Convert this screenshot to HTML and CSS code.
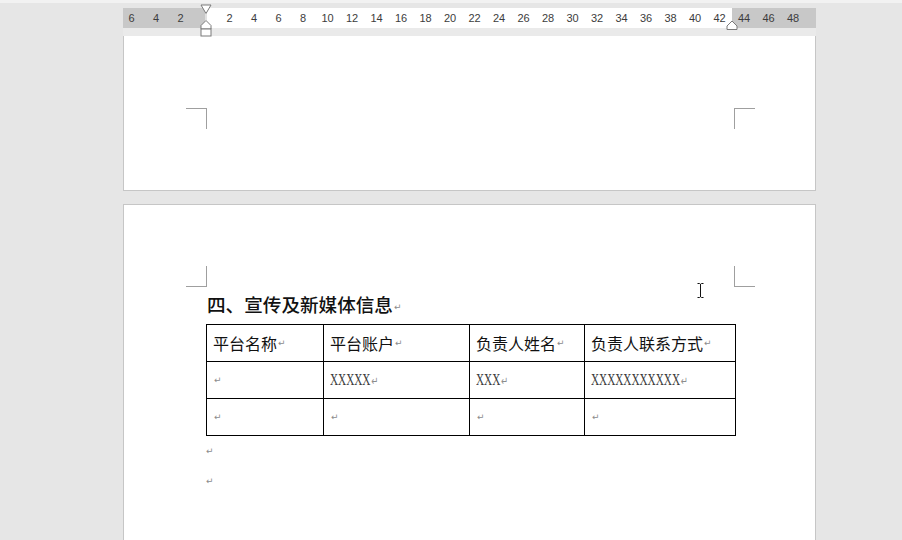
FILE: index.html
```html
<!DOCTYPE html>
<html lang="zh">
<head>
<meta charset="utf-8">
<title>Document</title>
<link rel="stylesheet" href="styles.css">
</head>
<body>
<div class="top-strip"></div>
<div class="ruler">
  <div class="ticks">
    <span>6</span><span>4</span><span>2</span><span></span><span>2</span><span>4</span><span>6</span><span>8</span><span>10</span><span>12</span><span>14</span><span>16</span><span>18</span><span>20</span><span>22</span><span>24</span><span>26</span><span>28</span><span>30</span><span>32</span><span>34</span><span>36</span><span>38</span><span>40</span><span>42</span><span>44</span><span>46</span><span>48</span>
  </div>
  <svg class="indent-left" width="12" height="33" viewBox="0 0 12 33">
    <polygon points="1,1 11,1 6,9.5" fill="#fff" stroke="#7a7a7a" stroke-width="1"/>
    <polygon points="6,16.5 11,21.5 11,25 1,25 1,21.5" fill="#fff" stroke="#7a7a7a" stroke-width="1"/>
    <rect x="1" y="25" width="10" height="7" fill="#fff" stroke="#7a7a7a" stroke-width="1"/>
    <line x1="6" y1="9.5" x2="6" y2="16.5" stroke="#9a9a9a" stroke-width="0.6"/>
  </svg>
  <svg class="indent-right" width="12" height="11" viewBox="0 0 12 11">
    <polygon points="6,1 11,6 11,9.5 1,9.5 1,6" fill="#fff" stroke="#7a7a7a" stroke-width="1"/>
  </svg>
</div>
<div class="ruler-gap"></div>
<div class="page page-one">
  <div class="corners corners-bottom">
    <div class="corner corner-bl"></div>
    <div class="corner corner-br"></div>
  </div>
</div>
<div class="page page-two">
  <div class="corners corners-top">
    <div class="corner corner-tl"></div>
    <div class="corner corner-tr"></div>
  </div>
  <div class="body-text">
    <h2 class="heading">四、宣传及新媒体信息<span class="pm">↵</span></h2>
    <div class="grid-table">
      <div class="cell head">平台名称<span class="pm">↵</span></div>
      <div class="cell head">平台账户<span class="pm">↵</span></div>
      <div class="cell head">负责人姓名<span class="pm">↵</span></div>
      <div class="cell head">负责人联系方式<span class="pm">↵</span></div>
      <div class="cell"><span class="pm">↵</span></div>
      <div class="cell"><span class="latin">XXXXX<span class="pm">↵</span></span></div>
      <div class="cell"><span class="latin">XXX<span class="pm">↵</span></span></div>
      <div class="cell"><span class="latin">XXXXXXXXXXX<span class="pm">↵</span></span></div>
      <div class="cell"><span class="pm">↵</span></div>
      <div class="cell"><span class="pm">↵</span></div>
      <div class="cell"><span class="pm">↵</span></div>
      <div class="cell"><span class="pm">↵</span></div>
    </div>
    <p class="empty-para"><span class="pm">↵</span></p>
    <p class="empty-para"><span class="pm">↵</span></p>
  </div>
  <svg class="ibeam" width="9" height="17" viewBox="0 0 9 17">
    <path d="M1.5 1.5 H3.5 M5.5 1.5 H7.5 M4.5 2 V15 M1.5 15.5 H3.5 M5.5 15.5 H7.5 M3.5 1.5 L4.5 2.3 L5.5 1.5 M3.5 15.5 L4.5 14.7 L5.5 15.5" stroke="#111" stroke-width="1" fill="none"/>
  </svg>
</div>
</body>
</html>
```

FILE: styles.css
```css
html, body {
  margin: 0;
  padding: 0;
}
body {
  width: 902px;
  height: 540px;
  overflow: hidden;
  background: #e6e6e6;
  font-family: "Noto Sans CJK SC", "Liberation Sans", sans-serif;
  display: flex;
  flex-direction: column;
}
.top-strip {
  height: 3px;
  background: #f2f2f2;
  flex: none;
}
.ruler {
  position: relative;
  flex: none;
  margin-top: 5px;
  margin-left: 123px;
  width: 693px;
  height: 20px;
  background: linear-gradient(to right, #c8c8c8 0 82px, #ffffff 82px 609px, #c8c8c8 609px 693px);
  z-index: 2;
}
.ticks {
  display: flex;
  margin-left: -3.75px;
  height: 20px;
  align-items: center;
}
.ticks span {
  flex: none;
  width: 24.5px;
  text-align: center;
  font-family: "Liberation Sans", Arial, sans-serif;
  font-size: 11px;
  color: #3c3c3c;
  line-height: 20px;
}
.indent-left {
  position: absolute;
  left: 77px;
  top: -4px;
}
.indent-right {
  position: absolute;
  left: 603px;
  top: 12px;
}
.ruler-gap {
  flex: none;
  height: 8px;
  margin-left: 123px;
  width: 693px;
  background: #eaeaea;
}
.page {
  flex: none;
  margin-left: 123px;
  width: 691px;
  background: #ffffff;
  border: 1px solid #c6c6c6;
}
.page-one {
  border-top: none;
  height: 154px;
}
.page-two {
  position: relative;
  margin-top: 13px;
  height: 400px;
}
.corners {
  display: flex;
  justify-content: space-between;
  margin-left: 62px;
  width: 569px;
}
.corners-bottom {
  margin-top: 72px;
}
.corners-top {
  margin-top: 61px;
}
.corner {
  box-sizing: border-box;
  width: 21px;
  height: 21px;
  border: 0 solid #9f9f9f;
}
.corner-bl { border-top-width: 1px; border-right-width: 1px; }
.corner-br { border-top-width: 1px; border-left-width: 1px; }
.corner-tl { border-bottom-width: 1px; border-right-width: 1px; }
.corner-tr { border-bottom-width: 1px; border-left-width: 1px; }
.body-text {
  margin-left: 82px;
  display: flex;
  flex-direction: column;
}
.heading {
  margin: 4px 0 0 1px;
  font-size: 18.6px;
  line-height: 26px;
  font-weight: 500;
  color: #111;
}
.pm {
  font-family: "DejaVu Sans", sans-serif;
  font-size: 9px;
  font-weight: 400;
  color: #8c8c8c;
  margin-left: 1px;
  vertical-align: middle;
}
.grid-table {
  margin-top: 4px;
  display: grid;
  grid-template-columns: 117px 146px 115px 151px;
  grid-auto-rows: 37px;
  width: 530px;
  box-sizing: border-box;
  border-left: 1px solid #000;
  border-top: 1px solid #000;
}
.cell {
  box-sizing: border-box;
  border-right: 1px solid #000;
  border-bottom: 1px solid #000;
  padding-left: 6px;
  display: flex;
  align-items: center;
  white-space: nowrap;
  overflow: hidden;
}
.cell.head {
  font-size: 16px;
  color: #111;
}
.latin {
  display: inline-block;
  font-family: "Liberation Serif", "Times New Roman", serif;
  font-size: 16px;
  color: #3a3a3a;
  transform: scaleX(0.7);
  transform-origin: left center;
}
.latin .pm {
  font-size: 12px;
}
.empty-para {
  margin: 0;
  height: 30px;
  display: flex;
  align-items: center;
}
.empty-para .pm {
  margin-left: 0;
}
.ibeam {
  position: absolute;
  left: 572px;
  top: 77px;
}
```
